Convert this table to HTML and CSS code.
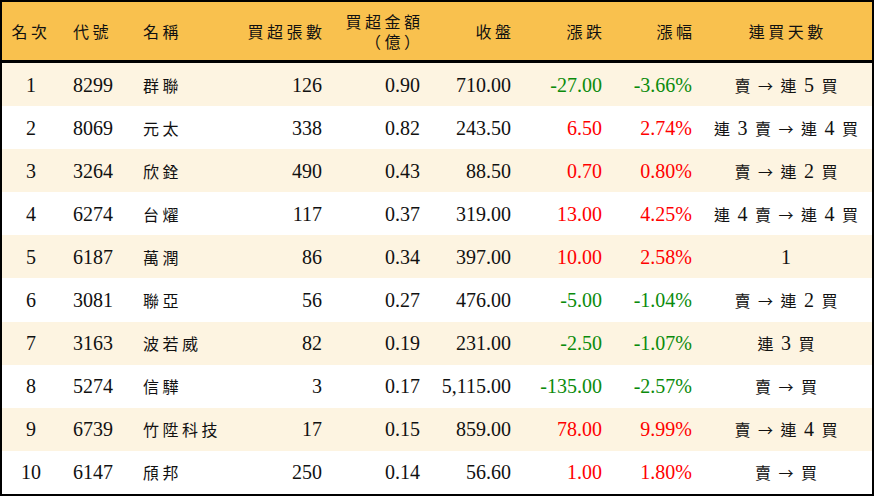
FILE: index.html
```html
<!DOCTYPE html>
<html lang="zh-Hant">
<head>
<meta charset="utf-8">
<link rel="stylesheet" href="styles.css">
</head>
<body>
<div class="board">
  <div class="row head">
    <div class="c center"><span class="k">名次</span></div>
    <div class="c left2"><span class="k">代號</span></div>
    <div class="c left"><span class="k">名稱</span></div>
    <div class="c right"><span class="k kr">買超張數</span></div>
    <div class="c right stack"><span class="k kr">買超金額</span><span class="k kr">（億）</span></div>
    <div class="c right"><span class="k kr">收盤</span></div>
    <div class="c right"><span class="k kr">漲跌</span></div>
    <div class="c right"><span class="k kr">漲幅</span></div>
    <div class="c center"><span class="k kr">連買天數</span></div>
  </div>
  <div class="body">
    <div class="row odd">
      <div class="c center">1</div><div class="c left2">8299</div><div class="c left"><span class="k">群聯</span></div>
      <div class="c right">126</div><div class="c right">0.90</div><div class="c right">710.00</div>
      <div class="c right down">-27.00</div><div class="c right down">-3.66%</div>
      <div class="c center days"><span class="d">賣</span> <span class="ar">→</span> <span class="d">連</span> 5 <span class="d">買</span></div>
    </div>
    <div class="row">
      <div class="c center">2</div><div class="c left2">8069</div><div class="c left"><span class="k">元太</span></div>
      <div class="c right">338</div><div class="c right">0.82</div><div class="c right">243.50</div>
      <div class="c right up">6.50</div><div class="c right up">2.74%</div>
      <div class="c center days"><span class="d">連</span> 3 <span class="d">賣</span> <span class="ar">→</span> <span class="d">連</span> 4 <span class="d">買</span></div>
    </div>
    <div class="row odd">
      <div class="c center">3</div><div class="c left2">3264</div><div class="c left"><span class="k">欣銓</span></div>
      <div class="c right">490</div><div class="c right">0.43</div><div class="c right">88.50</div>
      <div class="c right up">0.70</div><div class="c right up">0.80%</div>
      <div class="c center days"><span class="d">賣</span> <span class="ar">→</span> <span class="d">連</span> 2 <span class="d">買</span></div>
    </div>
    <div class="row">
      <div class="c center">4</div><div class="c left2">6274</div><div class="c left"><span class="k">台燿</span></div>
      <div class="c right">117</div><div class="c right">0.37</div><div class="c right">319.00</div>
      <div class="c right up">13.00</div><div class="c right up">4.25%</div>
      <div class="c center days"><span class="d">連</span> 4 <span class="d">賣</span> <span class="ar">→</span> <span class="d">連</span> 4 <span class="d">買</span></div>
    </div>
    <div class="row odd">
      <div class="c center">5</div><div class="c left2">6187</div><div class="c left"><span class="k">萬潤</span></div>
      <div class="c right">86</div><div class="c right">0.34</div><div class="c right">397.00</div>
      <div class="c right up">10.00</div><div class="c right up">2.58%</div>
      <div class="c center days">1</div>
    </div>
    <div class="row">
      <div class="c center">6</div><div class="c left2">3081</div><div class="c left"><span class="k">聯亞</span></div>
      <div class="c right">56</div><div class="c right">0.27</div><div class="c right">476.00</div>
      <div class="c right down">-5.00</div><div class="c right down">-1.04%</div>
      <div class="c center days"><span class="d">賣</span> <span class="ar">→</span> <span class="d">連</span> 2 <span class="d">買</span></div>
    </div>
    <div class="row odd">
      <div class="c center">7</div><div class="c left2">3163</div><div class="c left"><span class="k">波若威</span></div>
      <div class="c right">82</div><div class="c right">0.19</div><div class="c right">231.00</div>
      <div class="c right down">-2.50</div><div class="c right down">-1.07%</div>
      <div class="c center days"><span class="d">連</span> 3 <span class="d">買</span></div>
    </div>
    <div class="row">
      <div class="c center">8</div><div class="c left2">5274</div><div class="c left"><span class="k">信驊</span></div>
      <div class="c right">3</div><div class="c right">0.17</div><div class="c right">5,115.00</div>
      <div class="c right down">-135.00</div><div class="c right down">-2.57%</div>
      <div class="c center days"><span class="d">賣</span> <span class="ar">→</span> <span class="d">買</span></div>
    </div>
    <div class="row odd">
      <div class="c center">9</div><div class="c left2">6739</div><div class="c left"><span class="k">竹陞科技</span></div>
      <div class="c right">17</div><div class="c right">0.15</div><div class="c right">859.00</div>
      <div class="c right up">78.00</div><div class="c right up">9.99%</div>
      <div class="c center days"><span class="d">賣</span> <span class="ar">→</span> <span class="d">連</span> 4 <span class="d">買</span></div>
    </div>
    <div class="row">
      <div class="c center">10</div><div class="c left2">6147</div><div class="c left"><span class="k">頎邦</span></div>
      <div class="c right">250</div><div class="c right">0.14</div><div class="c right">56.60</div>
      <div class="c right up">1.00</div><div class="c right up">1.80%</div>
      <div class="c center days"><span class="d">賣</span> <span class="ar">→</span> <span class="d">買</span></div>
    </div>
  </div>
</div>
</body>
</html>
```

FILE: styles.css
```css
html, body {
  margin: 0;
  padding: 0;
  background: #ffffff;
}

.board {
  box-sizing: border-box;
  width: 874px;
  height: 496px;
  border: 2px solid #000;
  display: flex;
  flex-direction: column;
  font-family: "Liberation Serif", "Noto Sans CJK TC", serif;
  font-size: 20px;
  color: #111;
}

.row {
  display: grid;
  grid-template-columns: 58px 75px 95px 100px 98px 91px 91px 90px 1fr;
  align-items: center;
}

.head {
  height: 58px;
  flex: none;
  background: #f9c14e;
  border-bottom: 3px solid #000;
}

.body {
  flex: 1;
  display: grid;
  grid-auto-rows: 1fr;
}

.odd {
  background: #fdf4e1;
}

.c {
  white-space: nowrap;
  line-height: 1;
}

.center {
  text-align: center;
}

.left {
  padding-left: 8px;
}

.left2 {
  padding-left: 13px;
}

.right {
  text-align: right;
  padding-right: 8px;
}

.stack {
  display: flex;
  flex-direction: column;
  align-items: flex-end;
  gap: 3px;
}

.stack .k {
  line-height: 17px;
}

.k {
  font-family: "Noto Sans CJK TC", sans-serif;
  font-size: 16px;
  letter-spacing: 3.5px;
  font-weight: 400;
}

.kr {
  margin-right: -3.5px;
}

.d {
  font-family: "Noto Sans CJK TC", sans-serif;
  font-size: 16px;
  margin: 0 2.5px;
}

.ar {
  font-family: "Noto Sans CJK TC", sans-serif;
  font-size: 15px;
}

.up {
  color: #ff0000;
}

.down {
  color: #0b8b0b;
}
```
